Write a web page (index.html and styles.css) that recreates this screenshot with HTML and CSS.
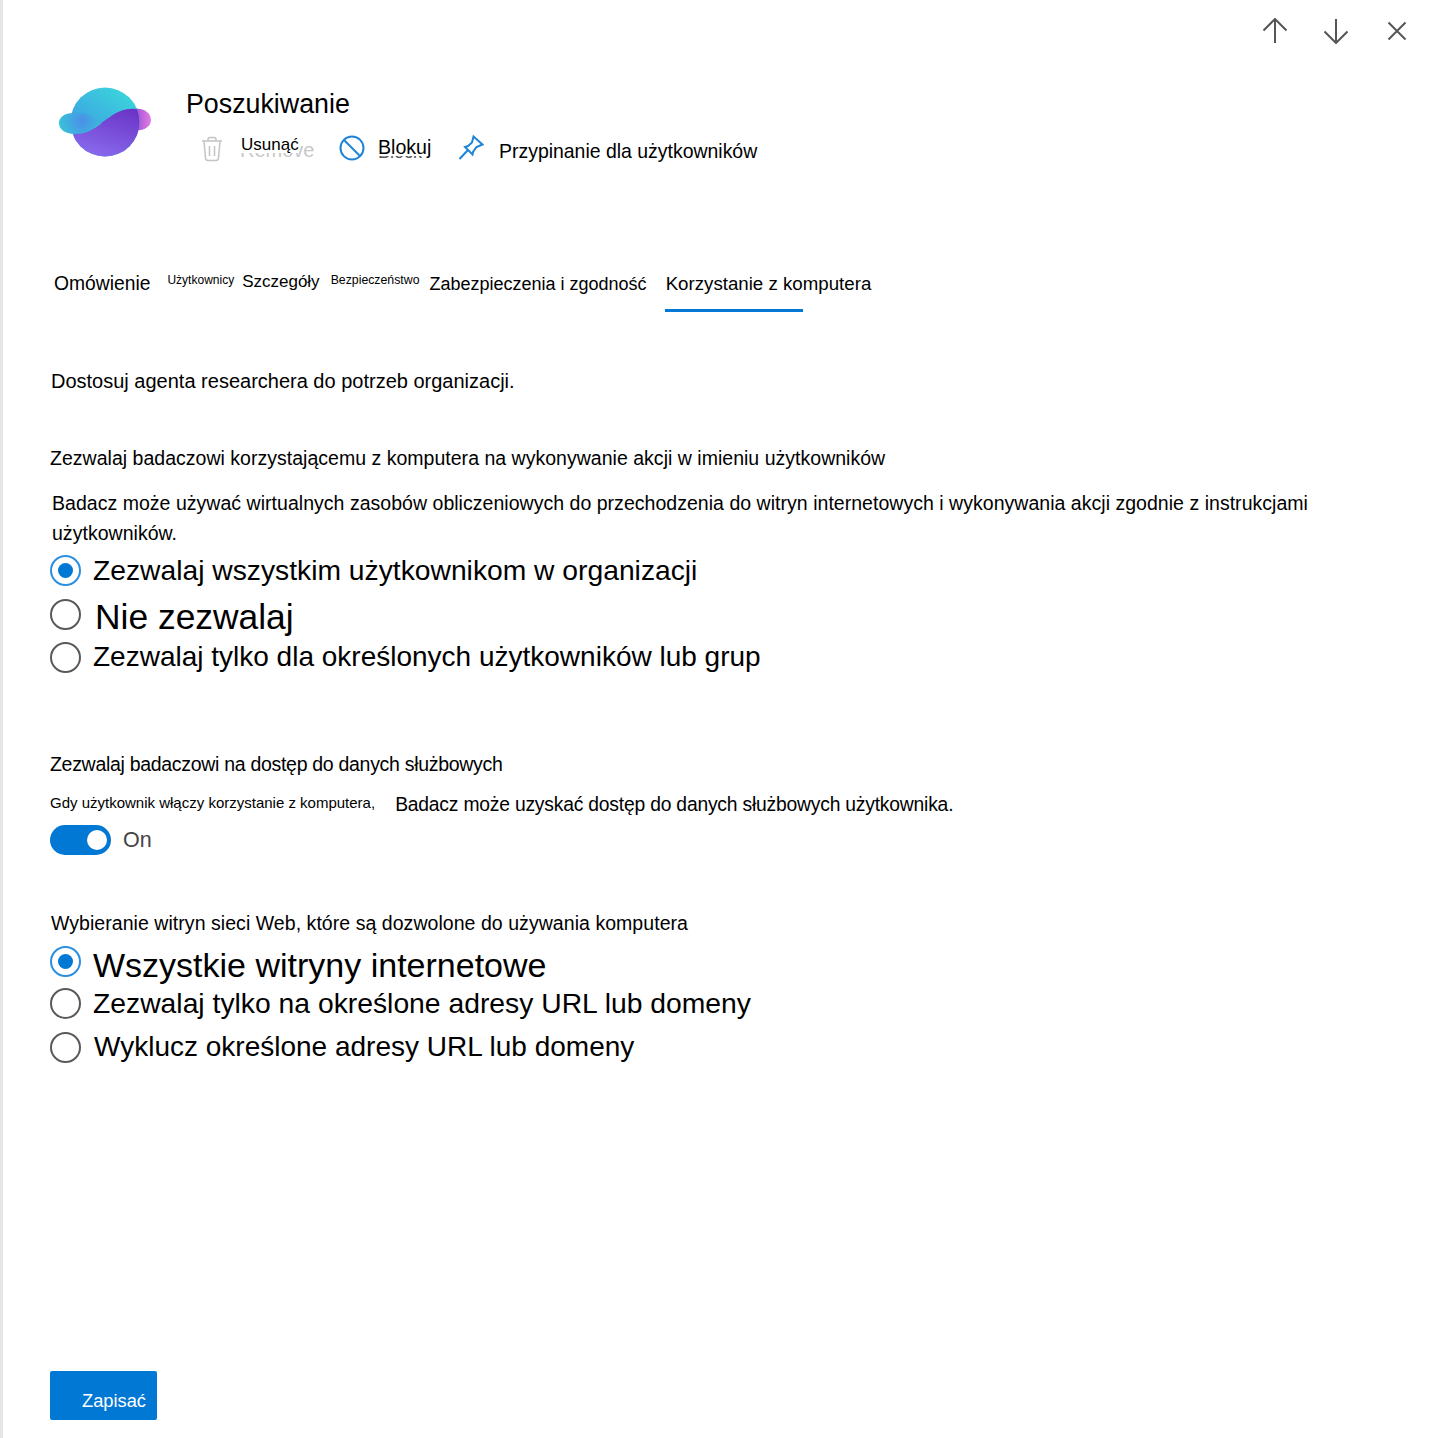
FILE: index.html
```html
<!DOCTYPE html>
<html lang="pl">
<head>
    <title>Poszukiwanie</title>
    <meta charset="utf-8">
    <link rel="stylesheet" href="styles.css">
</head>
<body>
<div class="panel">
    <div class="topnav">
        <svg class="nav-icon" viewBox="0 0 26 26"><path d="M13 25V1M1.500 12.500L13 1l11.500 11.500"/></svg>
        <svg class="nav-icon" viewBox="0 0 26 26"><path d="M13 1v24M1.500 13.500L13 25l11.500-11.500"/></svg>
        <svg class="nav-icon nav-close" viewBox="0 0 20 20"><path d="M1.500 1.500l17 17M18.500 1.500l-17 17"/></svg>
    </div>

    <div class="header">
        <svg class="logo" viewBox="0 0 94 72">
            <defs>
                <linearGradient id="top" x1="0.7" y1="0" x2="0.2" y2="0.7">
                    <stop offset="0" stop-color="#3bd3dc"/>
                    <stop offset="1" stop-color="#3d9fe2"/>
                </linearGradient>
                <linearGradient id="bottom" x1="0.8" y1="0" x2="0.4" y2="1">
                    <stop offset="0" stop-color="#6a34c6"/>
                    <stop offset="1" stop-color="#8a6cee"/>
                </linearGradient>
                <radialGradient id="wing" gradientUnits="userSpaceOnUse" cx="24" cy="35" r="24">
                    <stop offset="0" stop-color="#4a8fe8"/>
                    <stop offset="1" stop-color="#38c4d8"/>
                </radialGradient>
                <linearGradient id="side" x1="0" y1="0" x2="1" y2="0">
                    <stop offset="0" stop-color="#8a3fd0"/>
                    <stop offset="1" stop-color="#e07fe4"/>
                </linearGradient>
                <clipPath id="ball"><circle cx="47" cy="36" r="34.500"/></clipPath>
            </defs>
            <path d="M72 23C84 21 93 26 93 34C93 40 87 45 78 44Z" fill="url(#side)"/>
            <circle cx="47" cy="36" r="34.500" fill="url(#top)"/>
            <path clip-path="url(#ball)" d="M78 23C62 21 52 31 42 38C34 44 26 48 16 48L16 74L84 74L84 23Z" fill="url(#bottom)"/>
            <path d="M15 27C7 27 1 31 1 37C1 44 8 48 17 48C28 48 36 43 43 38C37 29 26 26 15 27Z" fill="url(#wing)"/>
        </svg>
        <div class="header-main">
            <div class="title">Poszukiwanie</div>
            <div class="actions">
                <div class="action action-remove">
                    <svg class="act-icon" width="24" height="26" viewBox="0 0 24 26"><path class="grey" d="M2 5h20M8 5V3.500C8 2 9 1.500 10 1.500h4c1 0 2 .5 2 2V5M4 5l1.500 17c.1 1.500 1 2.500 2.500 2.500h8c1.500 0 2.400-1 2.500-2.500L20 5M9.500 10v10M14.500 10v10"/></svg>
                    <span class="act-label label-remove"><span class="ghost">Remove</span><span class="act-text">Usunąć</span></span>
                </div>
                <div class="action action-block">
                    <svg class="act-icon" width="26" height="26" viewBox="0 0 26 26"><circle class="blue" cx="13" cy="13" r="11.500"/><path class="blue" d="M5 5l16 16"/></svg>
                    <span class="act-label label-block"><span class="ghost ghost-dark">Block</span><span class="act-text">Blokuj</span></span>
                </div>
                <div class="action action-pin">
                    <svg class="act-icon" width="26" height="26" viewBox="0 0 26 26"><path class="blue" d="M15.500 1.500l9 8-6 2.500-3.500 5-.5 2.500-7.500-7.500 3-1 4-3.500zM10 15l-8.500 9"/></svg>
                    <span class="label-pin">Przypinanie dla użytkowników</span>
                </div>
            </div>
        </div>
    </div>

    <div class="tabs">
        <span class="tab tab-overview">Omówienie</span>
        <span class="tab tab-small tab-users">Użytkownicy</span>
        <span class="tab tab-details">Szczegóły</span>
        <span class="tab tab-small tab-security">Bezpieczeństwo</span>
        <span class="tab tab-compliance">Zabezpieczenia i zgodność</span>
        <span class="tab tab-active">Korzystanie z komputera</span>
    </div>

    <p class="intro">Dostosuj agenta researchera do potrzeb organizacji.</p>

    <section class="group-actions">
        <h2 class="heading">Zezwalaj badaczowi korzystającemu z komputera na wykonywanie akcji w imieniu użytkowników</h2>
        <p class="desc">Badacz może używać wirtualnych zasobów obliczeniowych do przechodzenia do witryn internetowych i wykonywania akcji zgodnie z instrukcjami użytkowników.</p>
        <div class="radios">
            <label class="radio radio-on r1"><span class="dot"></span><span>Zezwalaj wszystkim użytkownikom w organizacji</span></label>
            <label class="radio r2"><span class="dot"></span><span class="big">Nie zezwalaj</span></label>
            <label class="radio r3"><span class="dot"></span><span>Zezwalaj tylko dla określonych użytkowników lub grup</span></label>
        </div>
    </section>

    <section class="group-data">
        <h2 class="heading heading-data">Zezwalaj badaczowi na dostęp do danych służbowych</h2>
        <p class="data-line"><span class="data-small">Gdy użytkownik włączy korzystanie z komputera,</span><span class="data-big">Badacz może uzyskać dostęp do danych służbowych użytkownika.</span></p>
        <div class="toggle-row">
            <span class="toggle"><span class="knob"></span></span>
            <span class="toggle-text">On</span>
        </div>
    </section>

    <section class="group-sites">
        <h2 class="heading heading-sites">Wybieranie witryn sieci Web, które są dozwolone do używania komputera</h2>
        <div class="radios">
            <label class="radio radio-on r4"><span class="dot"></span><span class="big-site">Wszystkie witryny internetowe</span></label>
            <label class="radio r5"><span class="dot"></span><span>Zezwalaj tylko na określone adresy URL lub domeny</span></label>
            <label class="radio r6"><span class="dot"></span><span>Wyklucz określone adresy URL lub domeny</span></label>
        </div>
    </section>

    <div class="footer">
        <button class="save">Zapisać</button>
    </div>
</div>
</body>
</html>
```

FILE: styles.css
```css
html, body {
    margin: 0;
    padding: 0;
}
body {
    color: #000;
    background: #fff;
    font-family: "Liberation Sans", Arial, sans-serif;
}
.panel {
    box-sizing: border-box;
    height: 1438px;
    border-left: 3px solid #e6e6e6;
    padding-left: 47px;
    display: flex;
    flex-direction: column;
}
p, h2 {
    margin: 0;
    font-weight: normal;
}

/* top nav */
.topnav {
    display: flex;
    justify-content: flex-end;
    gap: 35px;
    padding: 18px 22px 0 0;
    height: 26px;
}
.nav-icon {
    width: 26px;
    height: 26px;
    fill: none;
    stroke: #555;
    stroke-width: 2;
}
.nav-close {
    width: 20px;
    height: 20px;
    margin: 3px 1px 0 3px;
}

/* header */
.header {
    display: flex;
    margin: 42px 0 0 8px;
}
.logo {
    width: 94px;
    height: 72px;
}
.header-main {
    margin-left: 34px;
}
.title {
    font-size: 26.800px;
    line-height: 36px;
}
.actions {
    display: flex;
    margin: 11px 0 0 14px;
}
.action {
    display: flex;
}
.grey {
    fill: none;
    stroke: #c4c4c4;
    stroke-width: 1.500;
}
.blue {
    fill: none;
    stroke: #1e84d8;
    stroke-width: 2;
}
.act-icon {
    flex: none;
}
.act-label {
    position: relative;
    white-space: nowrap;
}
.act-text {
    display: block;
    position: relative;
    background: #fff;
}
.ghost {
    position: absolute;
    left: -1px;
    top: 3px;
    font-size: 20px;
    line-height: 20px;
    color: #c8c8c8;
}
.ghost-dark {
    left: 0;
    top: 4px;
    font-size: 18px;
    color: #555;
}
.action-remove {
    width: 139px;
    padding-top: 3px;
}
.label-remove {
    margin: 1px 0 0 17px;
    font-size: 17px;
    line-height: 16px;
}
.action-block {
    width: 120px;
    padding-top: 2px;
}
.label-block {
    margin: 3px 0 0 13px;
    font-size: 19.600px;
    line-height: 18px;
}
.action-pin {
    padding-top: 2px;
}
.action-pin .act-icon {
    margin-left: -1px;
}
.label-pin {
    margin: 5px 0 0 15px;
    font-size: 19.450px;
    line-height: 22px;
    white-space: nowrap;
}

/* tabs */
.tabs {
    display: flex;
    align-items: flex-start;
    margin: 110px 0 0 4px;
    height: 95px;
    box-sizing: border-box;
    white-space: nowrap;
}
.tab {
    font-size: 19.300px;
    line-height: 24px;
}
.tab-small {
    font-size: 12px;
    line-height: 16px;
}
.tab-users {
    margin-left: 17px;
}
.tab-details {
    margin: -2px 0 0 8px;
    font-size: 17px;
}
.tab-security {
    margin-left: 11px;
    font-size: 12.300px;
}
.tab-compliance {
    margin: 0 0 0 10px;
    font-size: 18px;
}
.tab-active {
    margin-left: 18px;
    padding: 0 0 16px 1px;
    position: relative;
    font-size: 18.700px;
}
.tab-active::after {
    content: "";
    position: absolute;
    left: 0;
    top: 37px;
    width: 138px;
    height: 3px;
    background: #0078d4;
}

.intro {
    font-size: 20px;
    line-height: 24px;
    margin: 0 0 0 1px;
    padding-top: 2px;
}
.heading {
    font-size: 19.500px;
    line-height: 24px;
    letter-spacing: 0.020px;
}
.group-actions {
    margin-top: 53px;
}
.desc {
    margin: 18px 90px 0 2px;
    font-size: 19.500px;
    line-height: 30px;
    letter-spacing: 0.030px;
}
.radios {
    display: flex;
    flex-direction: column;
}
.radio {
    display: flex;
    align-items: center;
    font-size: 28px;
    height: 40px;
    white-space: nowrap;
}
.dot {
    box-sizing: border-box;
    width: 31px;
    height: 31px;
    border-radius: 50%;
    border: 2px solid #595959;
    margin-right: 12px;
    flex: none;
    position: relative;
}
.radio-on .dot {
    border-color: #2b8fe0;
}
.radio-on .dot::after {
    content: "";
    position: absolute;
    inset: 6px;
    border-radius: 50%;
    background: #0078d4;
}
.big {
    font-size: 35.400px;
}
.big-site {
    font-size: 34px;
}
.r1 {
    margin-top: 1px;
    height: 42px;
    font-size: 28.250px;
}
.r2 {
    height: 46px;
}
.r2 .dot {
    margin-top: 0;
}
.r2 .big {
    margin: 6px 0 0 2px;
}
.group-data {
    margin-top: 75px;
}
.heading-data {
    letter-spacing: -0.300px;
}
.data-line {
    display: flex;
    align-items: flex-start;
    margin-top: 18px;
    white-space: nowrap;
}
.data-small {
    font-size: 15px;
    line-height: 18px;
}
.data-big {
    font-size: 19.300px;
    line-height: 22px;
    margin-left: 20px;
    letter-spacing: -0.200px;
}
.toggle-row {
    display: flex;
    align-items: center;
    margin-top: 9px;
}
.toggle {
    width: 61px;
    height: 30px;
    border-radius: 15px;
    background: #0078d4;
    display: flex;
    justify-content: flex-end;
    align-items: center;
    padding-right: 4px;
    box-sizing: border-box;
}
.knob {
    width: 20px;
    height: 20px;
    border-radius: 50%;
    background: #fff;
}
.toggle-text {
    font-size: 21.500px;
    color: #444;
    margin-left: 12px;
}
.group-sites {
    margin-top: 56px;
}
.heading-sites {
    margin-left: 1px;
    letter-spacing: 0.050px;
}
.r4 {
    height: 40px;
    margin-top: 10px;
}
.r4 .dot {
    margin-top: -8px;
}
.r5 {
    height: 36px;
    font-size: 28.300px;
}
.r6 {
    height: 52px;
}
.r6 span:last-child {
    margin-left: 1px;
}
.footer {
    margin-top: auto;
    padding-bottom: 18px;
}
.save {
    display: block;
    box-sizing: border-box;
    width: 107px;
    height: 49px;
    background: #0078d4;
    color: #fff;
    border: none;
    border-radius: 2px;
    font: 18.300px "Liberation Sans", Arial, sans-serif;
    text-align: right;
    padding: 10px 11px 0 0;
}
```
